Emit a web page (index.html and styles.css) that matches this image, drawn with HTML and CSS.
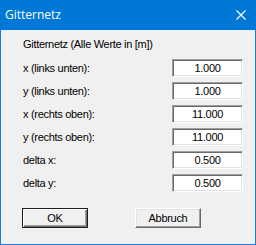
FILE: index.html
```html
<!DOCTYPE html>
<html lang="de">

<head>
    <meta charset="UTF-8">
    <title>Gitternetz</title>
    <link rel="stylesheet" href="styles.css">
</head>

<body>
    <div class="dialog">
        <div class="title-bar">
            <span class="title">Gitternetz</span>
            <svg class="close" width="10" height="10" viewBox="0 0 10 10">
                <path d="M0.5 0.5 L9.5 9.5 M9.5 0.5 L0.5 9.5" stroke="#fff" stroke-width="1.1" />
            </svg>
        </div>

        <div class="content">
            <div class="heading">Gitternetz (Alle Werte in [m])</div>

            <div class="fields">
                <label>x (links unten):</label>
                <input class="field" type="text" value="1.000">
                <label>y (links unten):</label>
                <input class="field" type="text" value="1.000">
                <label>x (rechts oben):</label>
                <input class="field" type="text" value="11.000">
                <label>y (rechts oben):</label>
                <input class="field" type="text" value="11.000">
                <label>delta x:</label>
                <input class="field" type="text" value="0.500">
                <label>delta y:</label>
                <input class="field" type="text" value="0.500">
            </div>

            <div class="buttons">
                <button class="btn default">OK</button>
                <button class="btn">Abbruch</button>
            </div>
        </div>
    </div>
</body>

</html>
```

FILE: styles.css
```css
* {
    margin: 0;
    padding: 0;
    box-sizing: border-box;
}

body {
    font-family: 'Liberation Sans', Arial, sans-serif;
    font-size: 11px;
    letter-spacing: -0.3px;
    color: #000;
    background: #f0f0f0;
}

.dialog {
    width: 256px;
    height: 245px;
    border: 1px solid #1a7fd4;
    border-top: none;
    background: #f0f0f0;
}

.title-bar {
    height: 30px;
    margin: 0 -1px;
    background: #0078d7;
    display: flex;
    align-items: center;
    justify-content: space-between;
    padding: 0 10px 1px 5px;
}

.title {
    font-family: 'Open Sans', 'Noto Sans', sans-serif;
    font-size: 12px;
    letter-spacing: 0;
    color: #fff;
}

.close {
    display: block;
}

.content {
    padding: 7px 0 0 21px;
}

.heading {
    line-height: 14px;
    padding-left: 1px;
}

.fields {
    display: grid;
    grid-template-columns: 150px 71px;
    grid-auto-rows: 18px;
    row-gap: 5px;
    margin-top: 8px;
    align-items: center;
}

.fields label {
    padding-left: 1px;
}

.field {
    width: 71px;
    height: 18px;
    font-family: inherit;
    font-size: 11px;
    letter-spacing: inherit;
    text-align: center;
    background: #fff;
    border: 1px solid;
    border-color: #a0a0a0 #fff #fff #a0a0a0;
    box-shadow: inset 1px 1px 0 #696969, inset -1px -1px 0 #e3e3e3;
    outline: none;
}

.buttons {
    display: flex;
    gap: 47px;
    margin-top: 16px;
}

.btn {
    width: 66px;
    height: 20px;
    font-family: inherit;
    font-size: 11px;
    letter-spacing: inherit;
    background: #f0f0f0;
    border: 1px solid;
    border-color: #fff #696969 #696969 #fff;
    box-shadow: inset -1px -1px 0 #a0a0a0, inset 1px 1px 0 #e3e3e3;
}

.btn.default {
    border: 1px solid #1e1e1e;
    box-shadow: inset 1px 1px 0 #fff, inset -1px -1px 0 #696969, inset -2px -2px 0 #a0a0a0;
}
```
